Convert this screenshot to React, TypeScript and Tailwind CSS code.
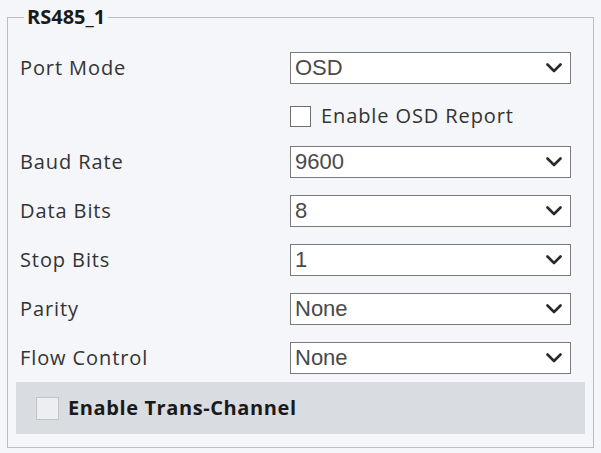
import React from "react";

const Chevron = () => (
  <svg width="16" height="10" viewBox="0 0 16 10" className="shrink-0">
    <path d="M1.5 1.5 L8 8 L14.5 1.5" fill="none" stroke="#2a2a2a" strokeWidth="2.6" strokeLinecap="round" strokeLinejoin="round" />
  </svg>
);

const Select = ({ value }: { value: string }) => (
  <div className="flex h-[32px] w-[281px] items-center justify-between border-[1.5px] border-[#7b7b7b] bg-white pl-[4px] pr-[8px]">
    <span className="text-[22px] leading-none text-[#4a4a4a]" style={{ fontFamily: '"Liberation Sans", Arial, sans-serif' }}>{value}</span>
    <Chevron />
  </div>
);

const Row = ({ label, value }: { label: string; value: string }) => (
  <div className="flex items-center">
    <div className="w-[270px] text-[20px] tracking-[0.9px] text-[#333333]">{label}</div>
    <Select value={value} />
  </div>
);

export default function App() {
  return (
    <div className="h-[453px] w-[601px] bg-[#f4f6f9] px-[7px] pt-[5px]" style={{ fontFamily: '"Open Sans", "Noto Sans", sans-serif' }}>
      <fieldset className="h-[443px] border border-[#bdbdbd] px-[8px]">
        <legend className="ml-[8px] px-[3px] text-[20px] font-bold leading-[24px] text-[#1a1a1a]">RS485_1</legend>
        <div className="flex flex-col pl-[4px] pt-[23px]">
          <Row label="Port Mode" value="OSD" />
          <div className="mt-[21px] flex items-center pl-[270px]">
            <div className="h-[21px] w-[21px] border-[1.5px] border-[#6e6e6e] bg-white" />
            <span className="ml-[10px] text-[20px] leading-[22px] tracking-[0.9px] text-[#333333]">Enable OSD Report</span>
          </div>
          <div className="mt-[19px] flex flex-col gap-[17px]">
            <Row label="Baud Rate" value="9600" />
            <Row label="Data Bits" value="8" />
            <Row label="Stop Bits" value="1" />
            <Row label="Parity" value="None" />
            <Row label="Flow Control" value="None" />
          </div>
        </div>
        <div className="mt-[8px] flex h-[52px] w-[569px] items-center bg-[#d9dce1] pl-[20px]">
          <div className="h-[23px] w-[23px] border border-[#c4c4c4] bg-[#eceef1]" />
          <span className="ml-[9px] text-[20px] font-bold tracking-[0.6px] text-[#1a1a1a]">Enable Trans-Channel</span>
        </div>
      </fieldset>
    </div>
  );
}
